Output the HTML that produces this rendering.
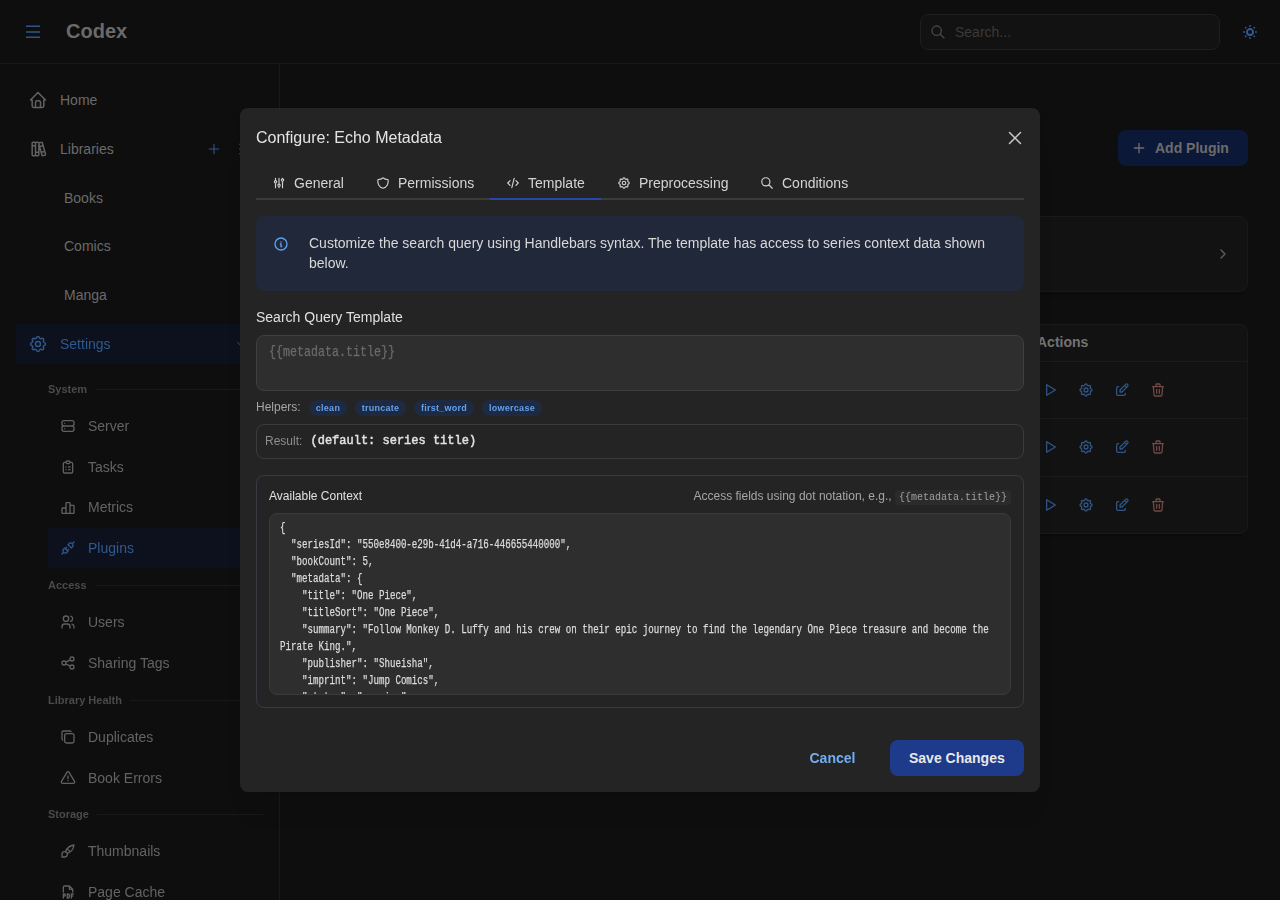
<!DOCTYPE html>
<html><head><meta charset="utf-8">
<style>
*{box-sizing:border-box;margin:0;padding:0}
html,body{width:1280px;height:900px;overflow:hidden;background:#0e0e0e;font-family:"Liberation Sans",sans-serif;}
.abs{position:absolute}
svg{display:block}
.ic{position:absolute;fill:none;stroke:currentColor;stroke-width:2;stroke-linecap:round;stroke-linejoin:round}
.nav{position:absolute;font-size:14px;color:#6a6a6a;line-height:20px;white-space:nowrap}
.sec{position:absolute;font-size:11px;font-weight:bold;color:#4a4a4a;line-height:14px}
.secline{position:absolute;height:1px;background:#18191c}
.t{position:absolute;white-space:nowrap}
.badge{top:400px;height:16px;border-radius:8px;background:#1e2a41;color:#63a0ec;font-size:9px;font-weight:bold;line-height:16px;text-align:center;letter-spacing:.25px}
</style></head><body>
<!-- header -->
<div class="abs" style="left:0;top:63px;width:1280px;height:1px;background:#17191c"></div>
<div class="abs" style="left:279px;top:64px;width:1px;height:836px;background:#17191c"></div>
<svg class="ic" style="left:24px;top:22px;color:#30548a;stroke-width:1.5;stroke-linecap:butt" width="18" height="18" viewBox="0 0 18 18"><path d="M2 4.2h14M2 9.9h14M2 15.2h14"/></svg>
<div class="t" style="left:66px;top:19px;font-size:20px;font-weight:bold;color:#6a6a6a;line-height:24px">Codex</div>
<div class="abs" style="left:920px;top:14px;width:300px;height:36px;border:1px solid #1e1e1e;border-radius:8px;background:#121212"></div>
<svg class="ic" style="left:930px;top:24px;color:#474747;stroke-width:2" width="16" height="16" viewBox="0 0 24 24"><path d="M3 10a7 7 0 1 0 14 0a7 7 0 1 0 -14 0M21 21l-6 -6"/></svg>
<div class="t" style="left:955px;top:24px;font-size:14px;color:#3a3a3a;line-height:16px">Search...</div>
<svg class="ic" style="left:1241px;top:23px;color:#325d94;stroke-width:2.4" width="18" height="18" viewBox="0 0 24 24"><path d="M8 12a4 4 0 1 0 8 0a4 4 0 1 0 -8 0M4 12h.01M12 4v.01M20 12h.01M12 20v.01M6.31 6.31l-.01 -.01M17.71 6.31l-.01 -.01M17.7 17.7l.01 .01M6.3 17.7l.01 .01"/></svg>

<!-- sidebar -->

<svg class="ic" style="left:28px;top:90px;color:#626262;stroke-width:1.8" width="20" height="20" viewBox="0 0 24 24"><path d="M5 12l-2 0l9 -9l9 9l-2 0M5 12v7a2 2 0 0 0 2 2h10a2 2 0 0 0 2 -2v-7M9 21v-6a2 2 0 0 1 2 -2h2a2 2 0 0 1 2 2v6"/></svg>
<div class="nav" style="left:60px;top:90px">Home</div>
<svg class="ic" style="left:28px;top:139px;color:#626262;stroke-width:1.8" width="20" height="20" viewBox="0 0 24 24"><path d="M5 5a1 1 0 0 1 1 -1h2a1 1 0 0 1 1 1v14a1 1 0 0 1 -1 1h-2a1 1 0 0 1 -1 -1zM9 5a1 1 0 0 1 1 -1h2a1 1 0 0 1 1 1v14a1 1 0 0 1 -1 1h-2a1 1 0 0 1 -1 -1zM5 8h4M9 16h4M13.803 4.56l2.184 -.53c.562 -.135 1.133 .19 1.282 .732l3.695 13.418a1.02 1.02 0 0 1 -.634 1.219l-.133 .041l-2.184 .53c-.562 .135 -1.133 -.19 -1.282 -.732l-3.695 -13.418a1.02 1.02 0 0 1 .634 -1.219l.133 -.041zM14 9l4 -1M16 16l3.923 -.98"/></svg>
<div class="nav" style="left:60px;top:139px">Libraries</div>
<svg class="ic" style="left:206px;top:141px;color:#33588c;stroke-width:1.6" width="16" height="16" viewBox="0 0 24 24"><path d="M12 5v14M5 12h14"/></svg>
<svg class="ic" style="left:232px;top:141px;color:#33588c;stroke-width:2.2" width="16" height="16" viewBox="0 0 24 24"><path d="M12 5v.01M12 12v.01M12 19v.01"/></svg>
<div class="nav" style="left:64px;top:188px">Books</div>
<div class="nav" style="left:64px;top:236px">Comics</div>
<div class="nav" style="left:64px;top:285px">Manga</div>
<div style="position:absolute;left:0;top:0;width:280px;height:900px;will-change:transform">
<div class="abs" style="left:16px;top:324px;width:250px;height:40px;background:#0c111d"></div>
<div class="abs" style="left:48px;top:528px;width:218px;height:40px;background:#0c111d"></div>
<svg class="ic" style="left:28px;top:334px;color:#30578a;stroke-width:1.8" width="20" height="20" viewBox="0 0 24 24"><path d="M10.325 4.317c.426 -1.756 2.924 -1.756 3.35 0a1.724 1.724 0 0 0 2.573 1.066c1.543 -.94 3.31 .826 2.37 2.37a1.724 1.724 0 0 0 1.065 2.572c1.756 .426 1.756 2.924 0 3.35a1.724 1.724 0 0 0 -1.066 2.573c.94 1.543 -.826 3.31 -2.37 2.37a1.724 1.724 0 0 0 -2.572 1.065c-.426 1.756 -2.924 1.756 -3.35 0a1.724 1.724 0 0 0 -2.573 -1.066c-1.543 .94 -3.31 -.826 -2.37 -2.37a1.724 1.724 0 0 0 -1.065 -2.572c-1.756 -.426 -1.756 -2.924 0 -3.35a1.724 1.724 0 0 0 1.066 -2.573c-.94 -1.543 .826 -3.31 2.37 -2.37c1 .608 2.296 .07 2.572 -1.065zM9 12a3 3 0 1 0 6 0a3 3 0 0 0 -6 0"/></svg>
<div class="nav" style="left:60px;top:334px;color:#2f5990">Settings</div>
<svg class="ic" style="left:234px;top:337px;color:#30578a;stroke-width:1.6" width="14" height="14" viewBox="0 0 24 24"><path d="M6 9l6 6l6 -6"/></svg>

<div class="sec" style="left:48px;top:382px">System</div><div class="secline" style="left:95px;top:389px;width:171px"></div>
<svg class="ic" style="left:60px;top:418px;color:#606060;stroke-width:2" width="16" height="16" viewBox="0 0 24 24"><path d="M3 7a3 3 0 0 1 3 -3h12a3 3 0 0 1 3 3v2a3 3 0 0 1 -3 3h-12a3 3 0 0 1 -3 -3zM3 15a3 3 0 0 1 3 -3h12a3 3 0 0 1 3 3v2a3 3 0 0 1 -3 3h-12a3 3 0 0 1 -3 -3zM7 8v.01M7 16v.01"/></svg>
<div class="nav" style="left:88px;top:416px;color:#636363">Server</div>
<svg class="ic" style="left:60px;top:459px;color:#606060;stroke-width:2" width="16" height="16" viewBox="0 0 24 24"><path d="M9 5h-2a2 2 0 0 0 -2 2v12a2 2 0 0 0 2 2h10a2 2 0 0 0 2 -2v-12a2 2 0 0 0 -2 -2h-2M9 5a2 2 0 0 1 2 -2h2a2 2 0 0 1 2 2a2 2 0 0 1 -2 2h-2a2 2 0 0 1 -2 -2zM9 12h.01M13 12h2M9 16h.01M13 16h2"/></svg>
<div class="nav" style="left:88px;top:457px;color:#636363">Tasks</div>
<svg class="ic" style="left:60px;top:500px;color:#606060;stroke-width:2" width="16" height="16" viewBox="0 0 24 24"><path d="M3 13a1 1 0 0 1 1 -1h4a1 1 0 0 1 1 1v6a1 1 0 0 1 -1 1h-4a1 1 0 0 1 -1 -1zM9 5a1 1 0 0 1 1 -1h4a1 1 0 0 1 1 1v14a1 1 0 0 1 -1 1h-4a1 1 0 0 1 -1 -1zM15 9a1 1 0 0 1 1 -1h4a1 1 0 0 1 1 1v10a1 1 0 0 1 -1 1h-4a1 1 0 0 1 -1 -1zM4 20h14"/></svg>
<div class="nav" style="left:88px;top:497px;color:#636363">Metrics</div>
<svg class="ic" style="left:60px;top:540px;color:#30578a;stroke-width:2" width="16" height="16" viewBox="0 0 24 24"><path d="M7 12l5 5l-1.5 1.5a3.536 3.536 0 1 1 -5 -5l1.5 -1.5zM17 12l-5 -5l1.5 -1.5a3.536 3.536 0 1 1 5 5l-1.5 1.5zM3 21l2.5 -2.5M18.5 5.5l2.5 -2.5M10 11l-2 2M13 14l-2 2"/></svg>
<div class="nav" style="left:88px;top:538px;color:#2f5990">Plugins</div>

<div class="sec" style="left:48px;top:578px">Access</div><div class="secline" style="left:95px;top:585px;width:171px"></div>
<svg class="ic" style="left:60px;top:614px;color:#606060;stroke-width:2" width="16" height="16" viewBox="0 0 24 24"><path d="M5 7a4 4 0 1 0 8 0a4 4 0 1 0 -8 0M3 21v-2a4 4 0 0 1 4 -4h4a4 4 0 0 1 4 4v2M16 3.13a4 4 0 0 1 0 7.75M21 21v-2a4 4 0 0 0 -3 -3.85"/></svg>
<div class="nav" style="left:88px;top:612px;color:#636363">Users</div>
<svg class="ic" style="left:60px;top:655px;color:#606060;stroke-width:2" width="16" height="16" viewBox="0 0 24 24"><path d="M3 12a3 3 0 1 0 6 0a3 3 0 1 0 -6 0M15 6a3 3 0 1 0 6 0a3 3 0 1 0 -6 0M15 18a3 3 0 1 0 6 0a3 3 0 1 0 -6 0M8.7 10.7l6.6 -3.4M8.7 13.3l6.6 3.4"/></svg>
<div class="nav" style="left:88px;top:653px;color:#636363">Sharing Tags</div>

<div class="sec" style="left:48px;top:693px">Library Health</div><div class="secline" style="left:130px;top:700px;width:136px"></div>
<svg class="ic" style="left:60px;top:729px;color:#606060;stroke-width:2" width="16" height="16" viewBox="0 0 24 24"><path d="M7 9.667a2.667 2.667 0 0 1 2.667 -2.667h8.666a2.667 2.667 0 0 1 2.667 2.667v8.666a2.667 2.667 0 0 1 -2.667 2.667h-8.666a2.667 2.667 0 0 1 -2.667 -2.667zM4.012 16.737a2.005 2.005 0 0 1 -1.012 -1.737v-10c0 -1.1 .9 -2 2 -2h10c.75 0 1.158 .385 1.5 1"/></svg>
<div class="nav" style="left:88px;top:727px;color:#636363">Duplicates</div>
<svg class="ic" style="left:60px;top:770px;color:#606060;stroke-width:2" width="16" height="16" viewBox="0 0 24 24"><path d="M12 9v4M10.363 3.591l-8.106 13.534a1.914 1.914 0 0 0 1.636 2.871h16.214a1.914 1.914 0 0 0 1.636 -2.87l-8.106 -13.536a1.914 1.914 0 0 0 -3.274 0zM12 16h.01"/></svg>
<div class="nav" style="left:88px;top:768px;color:#636363">Book Errors</div>

<div class="sec" style="left:48px;top:807px">Storage</div><div class="secline" style="left:97px;top:814px;width:166px"></div>
<svg class="ic" style="left:60px;top:843px;color:#606060;stroke-width:2" width="16" height="16" viewBox="0 0 24 24"><path d="M3 21v-4a4 4 0 1 1 4 4h-4M21 3a16 16 0 0 0 -12.8 10.2M21 3a16 16 0 0 1 -10.2 12.8M10.6 9a9 9 0 0 1 4.4 4.4"/></svg>
<div class="nav" style="left:88px;top:841px;color:#636363">Thumbnails</div>
<svg class="ic" style="left:60px;top:884px;color:#606060;stroke-width:2" width="16" height="16" viewBox="0 0 24 24"><path d="M14 3v4a1 1 0 0 0 1 1h4M5 12v-7a2 2 0 0 1 2 -2h7l5 5v4M5 18h1.5a1.5 1.5 0 0 0 0 -3h-1.5v6M17 18h2M20 15h-3v6M11 15v6h1a2 2 0 0 0 2 -2v-2a2 2 0 0 0 -2 -2h-1z"/></svg>
<div class="nav" style="left:88px;top:882px;color:#636363">Page Cache</div>

</div>
<!-- main content (behind modal) -->
<div class="abs" style="left:1118px;top:130px;width:130px;height:36px;border-radius:8px;background:#0c1838"></div>
<svg class="ic" style="left:1131px;top:140px;color:#6e6e6e;stroke-width:2" width="16" height="16" viewBox="0 0 24 24"><path d="M12 5v14M5 12h14"/></svg>
<div class="t" style="left:1155px;top:140px;font-size:14px;font-weight:bold;color:#6c6c6c;line-height:16px">Add Plugin</div>

<div class="abs" style="left:900px;top:216px;width:348px;height:76px;border:1px solid #17191c;border-radius:8px;background:#121212;box-shadow:0 6px 5px -5px rgba(0,0,0,.45)"></div>
<svg class="ic" style="left:1215px;top:246px;color:#5e5e5e;stroke-width:2" width="16" height="16" viewBox="0 0 24 24"><path d="M9 6l6 6l-6 6"/></svg>

<div class="abs" style="left:900px;top:324px;width:348px;height:210px;border:1px solid #17191c;border-radius:8px;background:#121212;box-shadow:0 6px 5px -5px rgba(0,0,0,.45)"></div>
<div class="abs" style="left:900px;top:361px;width:347px;height:1px;background:#1a1b1e"></div>
<div class="abs" style="left:900px;top:418px;width:347px;height:1px;background:#1a1b1e"></div>
<div class="abs" style="left:900px;top:476px;width:347px;height:1px;background:#1a1b1e"></div>
<div class="t" style="left:1037px;top:334px;font-size:14px;font-weight:bold;color:#737373;line-height:16px">Actions</div>
<svg class="ic" style="left:1042px;top:382px;color:#30568a;stroke-width:1.9" width="16" height="16" viewBox="0 0 24 24"><path d="M7 4v16l13 -8z"/></svg>
<svg class="ic" style="left:1078px;top:382px;color:#30568a;stroke-width:1.9" width="16" height="16" viewBox="0 0 24 24"><path d="M10.325 4.317c.426 -1.756 2.924 -1.756 3.35 0a1.724 1.724 0 0 0 2.573 1.066c1.543 -.94 3.31 .826 2.37 2.37a1.724 1.724 0 0 0 1.065 2.572c1.756 .426 1.756 2.924 0 3.35a1.724 1.724 0 0 0 -1.066 2.573c.94 1.543 -.826 3.31 -2.37 2.37a1.724 1.724 0 0 0 -2.572 1.065c-.426 1.756 -2.924 1.756 -3.35 0a1.724 1.724 0 0 0 -2.573 -1.066c-1.543 .94 -3.31 -.826 -2.37 -2.37a1.724 1.724 0 0 0 -1.065 -2.572c-1.756 -.426 -1.756 -2.924 0 -3.35a1.724 1.724 0 0 0 1.066 -2.573c-.94 -1.543 .826 -3.31 2.37 -2.37c1 .608 2.296 .07 2.572 -1.065zM9 12a3 3 0 1 0 6 0a3 3 0 0 0 -6 0"/></svg>
<svg class="ic" style="left:1114px;top:382px;color:#30568a;stroke-width:1.9" width="16" height="16" viewBox="0 0 24 24"><path d="M7 7h-1a2 2 0 0 0 -2 2v9a2 2 0 0 0 2 2h9a2 2 0 0 0 2 -2v-1M20.385 6.585a2.1 2.1 0 0 0 -2.97 -2.97l-8.415 8.385v3h3l8.385 -8.415zM16 5l3 3"/></svg>
<svg class="ic" style="left:1150px;top:382px;color:#744a45;stroke-width:1.9" width="16" height="16" viewBox="0 0 24 24"><path d="M4 7h16M10 11v6M14 11v6M5 7l1 12a2 2 0 0 0 2 2h8a2 2 0 0 0 2 -2l1 -12M9 7v-3a1 1 0 0 1 1 -1h4a1 1 0 0 1 1 1v3"/></svg>
<svg class="ic" style="left:1042px;top:439px;color:#30568a;stroke-width:1.9" width="16" height="16" viewBox="0 0 24 24"><path d="M7 4v16l13 -8z"/></svg>
<svg class="ic" style="left:1078px;top:439px;color:#30568a;stroke-width:1.9" width="16" height="16" viewBox="0 0 24 24"><path d="M10.325 4.317c.426 -1.756 2.924 -1.756 3.35 0a1.724 1.724 0 0 0 2.573 1.066c1.543 -.94 3.31 .826 2.37 2.37a1.724 1.724 0 0 0 1.065 2.572c1.756 .426 1.756 2.924 0 3.35a1.724 1.724 0 0 0 -1.066 2.573c.94 1.543 -.826 3.31 -2.37 2.37a1.724 1.724 0 0 0 -2.572 1.065c-.426 1.756 -2.924 1.756 -3.35 0a1.724 1.724 0 0 0 -2.573 -1.066c-1.543 .94 -3.31 -.826 -2.37 -2.37a1.724 1.724 0 0 0 -1.065 -2.572c-1.756 -.426 -1.756 -2.924 0 -3.35a1.724 1.724 0 0 0 1.066 -2.573c-.94 -1.543 .826 -3.31 2.37 -2.37c1 .608 2.296 .07 2.572 -1.065zM9 12a3 3 0 1 0 6 0a3 3 0 0 0 -6 0"/></svg>
<svg class="ic" style="left:1114px;top:439px;color:#30568a;stroke-width:1.9" width="16" height="16" viewBox="0 0 24 24"><path d="M7 7h-1a2 2 0 0 0 -2 2v9a2 2 0 0 0 2 2h9a2 2 0 0 0 2 -2v-1M20.385 6.585a2.1 2.1 0 0 0 -2.97 -2.97l-8.415 8.385v3h3l8.385 -8.415zM16 5l3 3"/></svg>
<svg class="ic" style="left:1150px;top:439px;color:#744a45;stroke-width:1.9" width="16" height="16" viewBox="0 0 24 24"><path d="M4 7h16M10 11v6M14 11v6M5 7l1 12a2 2 0 0 0 2 2h8a2 2 0 0 0 2 -2l1 -12M9 7v-3a1 1 0 0 1 1 -1h4a1 1 0 0 1 1 1v3"/></svg>
<svg class="ic" style="left:1042px;top:497px;color:#30568a;stroke-width:1.9" width="16" height="16" viewBox="0 0 24 24"><path d="M7 4v16l13 -8z"/></svg>
<svg class="ic" style="left:1078px;top:497px;color:#30568a;stroke-width:1.9" width="16" height="16" viewBox="0 0 24 24"><path d="M10.325 4.317c.426 -1.756 2.924 -1.756 3.35 0a1.724 1.724 0 0 0 2.573 1.066c1.543 -.94 3.31 .826 2.37 2.37a1.724 1.724 0 0 0 1.065 2.572c1.756 .426 1.756 2.924 0 3.35a1.724 1.724 0 0 0 -1.066 2.573c.94 1.543 -.826 3.31 -2.37 2.37a1.724 1.724 0 0 0 -2.572 1.065c-.426 1.756 -2.924 1.756 -3.35 0a1.724 1.724 0 0 0 -2.573 -1.066c-1.543 .94 -3.31 -.826 -2.37 -2.37a1.724 1.724 0 0 0 -1.065 -2.572c-1.756 -.426 -1.756 -2.924 0 -3.35a1.724 1.724 0 0 0 1.066 -2.573c-.94 -1.543 .826 -3.31 2.37 -2.37c1 .608 2.296 .07 2.572 -1.065zM9 12a3 3 0 1 0 6 0a3 3 0 0 0 -6 0"/></svg>
<svg class="ic" style="left:1114px;top:497px;color:#30568a;stroke-width:1.9" width="16" height="16" viewBox="0 0 24 24"><path d="M7 7h-1a2 2 0 0 0 -2 2v9a2 2 0 0 0 2 2h9a2 2 0 0 0 2 -2v-1M20.385 6.585a2.1 2.1 0 0 0 -2.97 -2.97l-8.415 8.385v3h3l8.385 -8.415zM16 5l3 3"/></svg>
<svg class="ic" style="left:1150px;top:497px;color:#744a45;stroke-width:1.9" width="16" height="16" viewBox="0 0 24 24"><path d="M4 7h16M10 11v6M14 11v6M5 7l1 12a2 2 0 0 0 2 2h8a2 2 0 0 0 2 -2l1 -12M9 7v-3a1 1 0 0 1 1 -1h4a1 1 0 0 1 1 1v3"/></svg>


<!-- modal -->
<div class="abs" style="left:240px;top:108px;width:800px;height:684px;border-radius:8px;background:#242424;box-shadow:0 1px 3px rgba(0,0,0,.05),0 28px 23px -7px rgba(0,0,0,.05),0 12px 12px -7px rgba(0,0,0,.04)">
</div>
<div class="t" style="left:256px;top:129px;font-size:16px;color:#e4e4e4;line-height:18px">Configure: Echo Metadata</div>
<svg class="ic" style="left:1007px;top:130px;color:#c8c8c8;stroke-width:1.5" width="16" height="16" viewBox="0 0 16 16"><path d="M2.5 2.5l11 11M13.5 2.5l-11 11"/></svg>

<div class="abs" style="left:256px;top:198px;width:768px;height:2px;background:#3b3b3b"></div>
<div class="abs" style="left:490px;top:198px;width:111px;height:2px;background:#2748a6"></div>
<svg class="ic" style="left:272px;top:176px;color:#d0d0d0;stroke-width:2" width="14" height="14" viewBox="0 0 24 24"><path d="M4 10a2 2 0 1 0 4 0a2 2 0 0 0 -4 0M6 4v4M6 12v8M10 16a2 2 0 1 0 4 0a2 2 0 0 0 -4 0M12 4v10M12 18v2M16 7a2 2 0 1 0 4 0a2 2 0 0 0 -4 0M18 4v1M18 9v11"/></svg>
<div class="t" style="left:294px;top:174px;font-size:14px;color:#d4d4d4;line-height:18px">General</div>
<svg class="ic" style="left:376px;top:176px;color:#d0d0d0;stroke-width:2" width="14" height="14" viewBox="0 0 24 24"><path d="M12 3a12 12 0 0 0 8.5 3a12 12 0 0 1 -8.5 15a12 12 0 0 1 -8.5 -15a12 12 0 0 0 8.5 -3"/></svg>
<div class="t" style="left:398px;top:174px;font-size:14px;color:#d4d4d4;line-height:18px">Permissions</div>
<svg class="ic" style="left:506px;top:176px;color:#d0d0d0;stroke-width:2" width="14" height="14" viewBox="0 0 24 24"><path d="M7 8l-4 4l4 4M17 8l4 4l-4 4M14 4l-4 16"/></svg>
<div class="t" style="left:528px;top:174px;font-size:14px;color:#d4d4d4;line-height:18px">Template</div>
<svg class="ic" style="left:617px;top:176px;color:#d0d0d0;stroke-width:2" width="14" height="14" viewBox="0 0 24 24"><path d="M10.325 4.317c.426 -1.756 2.924 -1.756 3.35 0a1.724 1.724 0 0 0 2.573 1.066c1.543 -.94 3.31 .826 2.37 2.37a1.724 1.724 0 0 0 1.065 2.572c1.756 .426 1.756 2.924 0 3.35a1.724 1.724 0 0 0 -1.066 2.573c.94 1.543 -.826 3.31 -2.37 2.37a1.724 1.724 0 0 0 -2.572 1.065c-.426 1.756 -2.924 1.756 -3.35 0a1.724 1.724 0 0 0 -2.573 -1.066c-1.543 .94 -3.31 -.826 -2.37 -2.37a1.724 1.724 0 0 0 -1.065 -2.572c-1.756 -.426 -1.756 -2.924 0 -3.35a1.724 1.724 0 0 0 1.066 -2.573c-.94 -1.543 .826 -3.31 2.37 -2.37c1 .608 2.296 .07 2.572 -1.065zM9 12a3 3 0 1 0 6 0a3 3 0 0 0 -6 0"/></svg>
<div class="t" style="left:639px;top:174px;font-size:14px;color:#d4d4d4;line-height:18px">Preprocessing</div>
<svg class="ic" style="left:760px;top:176px;color:#d0d0d0;stroke-width:2" width="14" height="14" viewBox="0 0 24 24"><path d="M3 10a7 7 0 1 0 14 0a7 7 0 1 0 -14 0M21 21l-6 -6"/></svg>
<div class="t" style="left:782px;top:174px;font-size:14px;color:#d4d4d4;line-height:18px">Conditions</div>

<div class="abs" style="left:256px;top:216px;width:768px;height:75px;border-radius:8px;background:#21283a"></div>
<svg class="ic" style="left:273px;top:236px;color:#5aa2f2;stroke-width:2" width="16" height="16" viewBox="0 0 24 24"><path d="M3 12a9 9 0 1 0 18 0a9 9 0 0 0 -18 0M12 9h.01M11 12h1v4h1"/></svg>
<div class="abs" style="left:309px;top:233px;width:700px;font-size:14px;color:#d8d8d8;line-height:20px">Customize the search query using Handlebars syntax. The template has access to series context data shown below.</div>

<div class="t" style="left:256px;top:308px;font-size:14px;color:#e0e0e0;line-height:18px">Search Query Template</div>
<div class="abs" style="left:256px;top:335px;width:768px;height:56px;border:1px solid #3f3f3f;border-radius:8px;background:#2e2e2e"></div>
<div class="t" style="left:269px;top:343px;font-size:14px;color:#6a6a6a;line-height:18px;font-family:'Liberation Mono',monospace;-webkit-text-stroke:.25px #6a6a6a;transform:scaleX(.833);transform-origin:0 0">{{metadata.title}}</div>

<div class="t" style="left:256px;top:400px;font-size:12px;color:#a6a6a6;line-height:14px">Helpers:</div>
<div class="abs badge" style="left:309px;width:38px">clean</div>
<div class="abs badge" style="left:355px;width:51px">truncate</div>
<div class="abs badge" style="left:414px;width:60px">first_word</div>
<div class="abs badge" style="left:482px;width:60px">lowercase</div>

<div class="abs" style="left:256px;top:424px;width:768px;height:35px;border:1px solid #3b3b3b;border-radius:8px"></div>
<div class="t" style="left:265px;top:434px;font-size:12px;color:#8e8e8e;line-height:14px">Result:</div>
<div class="t" style="left:310.5px;top:433px;font-size:12px;font-weight:normal;color:#e2e2e2;-webkit-text-stroke:.45px #e2e2e2;line-height:16px;font-family:'Liberation Mono',monospace">(default: series title)</div>

<div class="abs" style="left:256px;top:475px;width:768px;height:233px;border:1px solid #373a40;border-radius:8px"></div>
<div class="t" style="left:269px;top:489px;font-size:12px;color:#e0e0e0;line-height:14px">Available Context</div>
<div class="t" style="left:693.5px;top:489px;font-size:12px;color:#a6a6a6;line-height:14px">Access fields using dot notation, e.g.,</div>
<div class="abs" style="left:895px;top:490px;width:116px;height:15px;border-radius:4px;background:#2b2b2b"></div>
<div class="t" style="left:899px;top:491px;font-size:10px;color:#a0a0a0;line-height:13px;font-family:'Liberation Mono',monospace">{{metadata.title}}</div>
<div class="abs" style="left:269px;top:513px;width:742px;height:182px;border:1px solid #3b3b3b;border-radius:8px;background:#2e2e2e;overflow:hidden">
<pre style="position:absolute;left:10px;top:6px;font-family:'Liberation Mono',monospace;font-size:12px;line-height:17px;color:#dcdcdc;-webkit-text-stroke:.25px #dcdcdc;transform:scaleX(.763);transform-origin:0 0;white-space:pre">{
  "seriesId": "550e8400-e29b-41d4-a716-446655440000",
  "bookCount": 5,
  "metadata": {
    "title": "One Piece",
    "titleSort": "One Piece",
    "summary": "Follow Monkey D. Luffy and his crew on their epic journey to find the legendary One Piece treasure and become the
Pirate King.",
    "publisher": "Shueisha",
    "imprint": "Jump Comics",
    "status": "ongoing",
    "ageRating": 13,</pre>
</div>

<div class="t" style="left:809.5px;top:749px;font-size:14px;font-weight:bold;color:#72aef4;line-height:18px">Cancel</div>
<div class="abs" style="left:890px;top:740px;width:134px;height:36px;border-radius:8px;background:#1e3a8a"></div>
<div class="t" style="left:909px;top:749px;font-size:14px;font-weight:bold;color:#e8e8e8;line-height:18px">Save Changes</div>
</body></html>
